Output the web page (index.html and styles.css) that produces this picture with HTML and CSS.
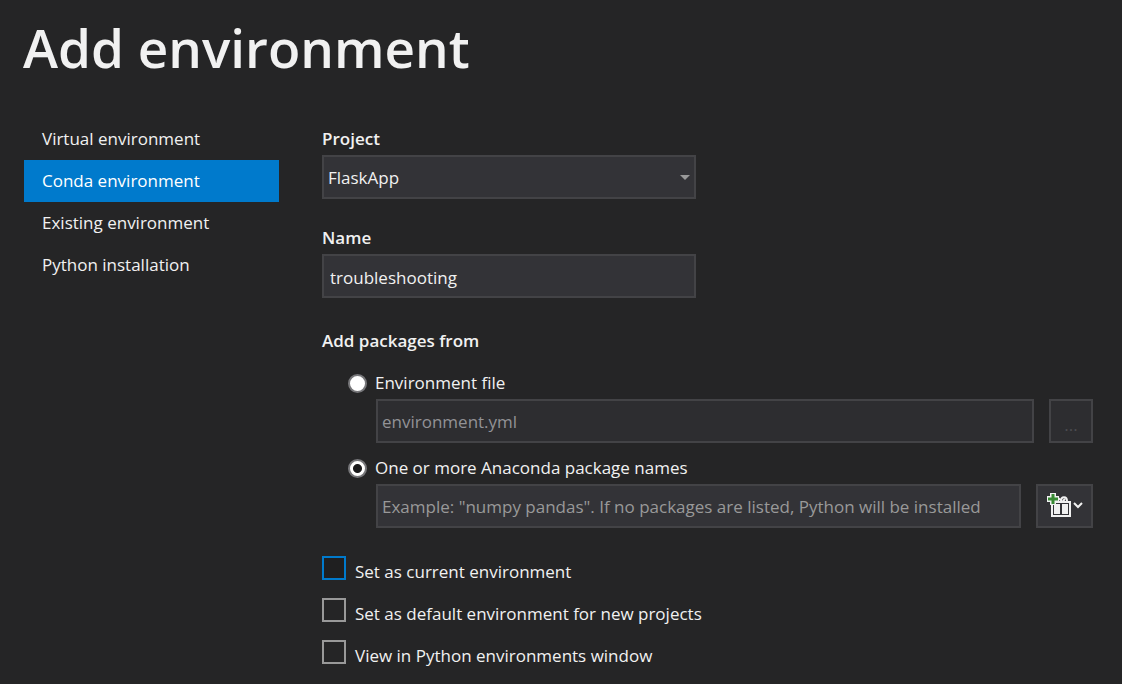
FILE: index.html
```html
<!DOCTYPE html>
<html lang="en">
<head>
<meta charset="utf-8">
<meta name="viewport" content="width=device-width, initial-scale=1">
<title>Add environment</title>
<link rel="stylesheet" href="styles.css">
</head>
<body>
<h1 class="title">Add environment</h1>
<div class="layout">
  <nav class="nav" aria-label="Environment type">
    <a class="nav-item" href="#virtual">Virtual environment</a>
    <a class="nav-item nav-item-active" href="#conda" aria-current="page">Conda environment</a>
    <a class="nav-item" href="#existing">Existing environment</a>
    <a class="nav-item" href="#install">Python installation</a>
  </nav>
  <form class="form">
    <div class="field">
      <label class="label" for="project">Project</label>
      <div class="select-wrap">
        <select class="box select" id="project"><option>FlaskApp</option></select>
        <svg class="select-arrow" width="10" height="5" viewBox="0 0 10 5" aria-hidden="true"><path d="M0 0h10L5 5z" fill="#999"/></svg>
      </div>
    </div>
    <div class="field">
      <label class="label" for="name">Name</label>
      <input class="box" id="name" type="text" value="troubleshooting">
    </div>
    <fieldset class="packages">
      <legend class="legend">Add packages from</legend>
      <div class="source">
        <label class="radio-label"><input class="radio" type="radio" name="source">Environment file</label>
        <div class="source-row">
          <input class="box box-disabled" type="text" placeholder="environment.yml" aria-label="Environment file path" disabled>
          <button class="button button-browse" type="button" aria-label="Browse" disabled>...</button>
        </div>
      </div>
      <div class="source">
        <label class="radio-label"><input class="radio" type="radio" name="source" checked>One or more Anaconda package names</label>
        <div class="source-row">
          <input class="box" type="text" placeholder="Example: &quot;numpy pandas&quot;. If no packages are listed, Python will be installed" aria-label="Package names">
          <button class="button button-add" type="button" aria-label="Add packages">
            <svg width="37" height="28" viewBox="0 0 37 28" aria-hidden="true">
              <path d="M12 6l4 3M15 9c0-5 6-5 6 0M17 9l2-2" fill="none" stroke="#f1f1f1" stroke-width="2"/>
              <path d="M5 9h20v16H5z" fill="#f1f1f1"/>
              <path d="M7 11h16v1H7zM7 22h16v1H7zM7 12h1v10H7zM22 12h1v10h-1zM14 12h2v10h-2z" fill="#333337"/>
              <path d="M4 1h6v3h3v6h-3v3H4v-3H1V4h3z" fill="#f1f1f1"/>
              <path d="M5.500 2h3v3.500H12v3H8.500V12h-3V8.500H2v-3h3.500z" fill="#388a34"/>
              <path d="M28 11l4 4 4-4" fill="none" stroke="#f1f1f1" stroke-width="2"/>
            </svg>
          </button>
        </div>
      </div>
    </fieldset>
    <div class="options">
      <label class="option"><input class="check check-focus" type="checkbox"><span class="option-text">Set as current environment</span></label>
      <label class="option"><input class="check" type="checkbox"><span class="option-text">Set as default environment for new projects</span></label>
      <label class="option"><input class="check" type="checkbox"><span class="option-text">View in Python environments window</span></label>
    </div>
  </form>
</div>
</body>
</html>
```
FILE: styles.css
```css
* { box-sizing: border-box; }

body {
  margin: 0;
  padding: 12px 29px 16px 23px;
  background: #252526;
  color: #f1f1f1;
  font: 17px/24px "Segoe UI", "Open Sans", "Noto Sans", sans-serif;
}

input, select, button { font: inherit; color: inherit; margin: 0; }

.title {
  margin: 0 0 34px;
  font-size: 53px;
  line-height: 72px;
  font-weight: 600;
}

.layout {
  display: grid;
  grid-template-columns: 255px minmax(0, 1fr);
  gap: 43px;
  padding-left: 1px;
}

.nav { display: flex; flex-direction: column; }

.nav-item {
  padding: 9px 18px;
  color: inherit;
  text-decoration: none;
}

.nav-item-active { background: #007acc; color: #fff; }

.form { padding-top: 9px; }

.field {
  display: flex;
  flex-direction: column;
  gap: 4px;
  max-width: 374px;
  margin-bottom: 27px;
}

.label, .legend { font-weight: 600; }

.box {
  display: block;
  width: 100%;
  min-width: 0;
  height: 44px;
  padding: 2px 6px 0;
  border: 2px solid #434346;
  border-radius: 0;
  background: #333337;
  outline: none;
}

.source-row .box { padding: 0 4px; }
.box::placeholder { color: #999; opacity: 1; }
.box-disabled { background: #2d2d30; }
.box-disabled::placeholder { color: #929296; }

.select-wrap { position: relative; }
.select { appearance: none; padding: 2px 4px 0; }
.select-arrow { position: absolute; right: 6px; top: 20px; pointer-events: none; }

.packages { margin: 31px 0 0; padding: 0; border: 0; min-width: 0; }
.legend { padding: 0; margin: 0 0 18px; }

.source { padding-left: 26px; margin-bottom: 13px; }

.radio-label {
  display: flex;
  align-items: center;
  gap: 8px;
  margin-bottom: 4px;
}

.radio {
  appearance: none;
  width: 19px;
  height: 19px;
  border: 2px solid #77777a;
  border-radius: 50%;
  background: #fff;
}

.radio:checked { background: radial-gradient(circle, #1b1b1c 4px, #fff 5px); }

.source-row { display: flex; gap: 15px; padding-left: 28px; }

.button {
  display: flex;
  flex: none;
  align-items: center;
  justify-content: center;
  height: 44px;
  padding: 0;
  border: 2px solid #434346;
  background: #333337;
}

.button-browse { width: 44px; padding-top: 8px; background: #2d2d30; color: #4c4c51; }
.button-add { width: 57px; }

.options { display: flex; flex-direction: column; gap: 14px; padding-top: 15px; }
.option { display: flex; align-items: center; gap: 9px; height: 28px; }

.check {
  appearance: none;
  align-self: flex-start;
  width: 24px;
  height: 24px;
  border: 2px solid #999;
  background: #252526;
}

.check-focus { border-color: #007acc; background: #1f1f20; }
.option-text { padding-top: 4px; }
```
